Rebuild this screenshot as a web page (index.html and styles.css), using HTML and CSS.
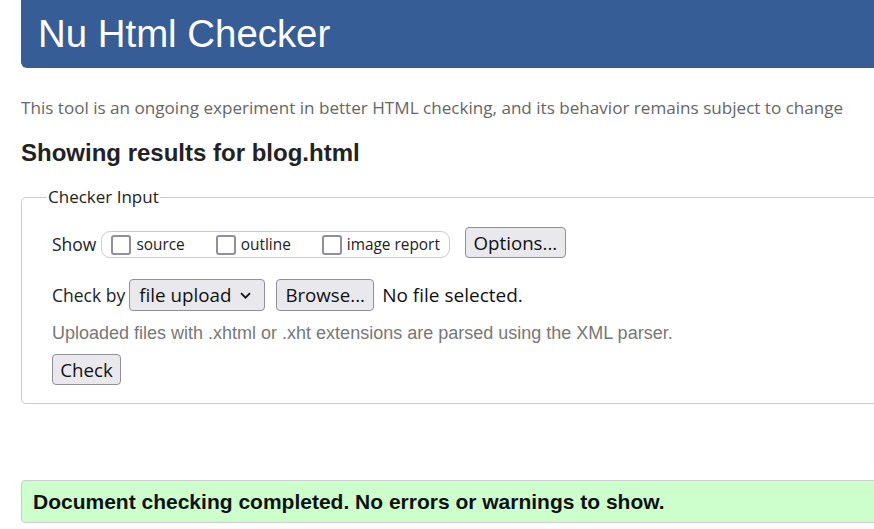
FILE: index.html
```html
<!DOCTYPE html>
<html>
<head>
<meta charset="utf-8">
<title>Nu Html Checker</title>
<link rel="stylesheet" href="styles.css">
</head>
<body>
<header class="masthead"><h1 class="title">Nu Html Checker</h1></header>
<p class="intro">This tool is an ongoing experiment in better HTML checking, and its behavior remains subject to change</p>
<h2 class="results">Showing results for blog.html</h2>
<form class="form">
  <fieldset class="inputs">
    <legend class="legend">Checker Input</legend>
    <div class="body">
      <div class="row row-show">
        <span class="label label-show">Show</span>
        <div class="showbox">
          <label class="opt"><span class="cb"></span>source</label>
          <label class="opt"><span class="cb"></span>outline</label>
          <label class="opt"><span class="cb"></span>image report</label>
        </div>
        <button type="button" class="btn btn-options">Options...</button>
      </div>
      <div class="row row-check">
        <span class="label label-check">Check by</span>
        <span class="select">file upload<svg class="chev" width="11" height="7" viewBox="0 0 11 7"><path d="M1 1.2 L5.5 5.7 L10 1.2" fill="none" stroke="#111" stroke-width="1.7"/></svg></span>
        <button type="button" class="btn btn-browse">Browse...</button>
        <span class="nofile">No file selected.</span>
      </div>
      <p class="note">Uploaded files with .xhtml or .xht extensions are parsed using the XML parser.</p>
      <button type="button" class="btn btn-check">Check</button>
    </div>
  </fieldset>
</form>
<div class="success">Document checking completed. No errors or warnings to show.</div>
</body>
</html>
```
FILE: styles.css
```css
html { overflow: hidden; }
body {
  margin: 0 0 0 21px;
  width: 900px;
  font-family: "Open Sans", "Noto Sans", sans-serif;
  color: #222;
  background: #fff;
}
.masthead {
  background: #365d95;
  height: 68px;
  border-radius: 0 0 0 6px;
  display: flex;
  align-items: center;
}
.title {
  margin: 0 0 0 17px;
  font-family: "Liberation Sans", Arial, sans-serif;
  font-weight: normal;
  font-size: 38.4px;
  color: #fff;
}
.intro {
  margin: 29px 0 0 0;
  font-size: 17.1px;
  color: #666;
  line-height: 22px;
}
.results {
  margin: 20px 0 0 0;
  font-family: "Liberation Sans", Arial, sans-serif;
  font-weight: bold;
  font-size: 24px;
  color: #222;
  line-height: 28px;
}
.form { margin-top: 19px; }
.inputs {
  margin: 0;
  border: 1px solid #ccc;
  border-radius: 5px;
  padding: 19px 0 18px 0;
}
.legend {
  padding: 0 1px;
  margin-left: 25px;
  font-size: 17px;
  line-height: 22px;
  color: #222;
}
.body { padding-left: 30px; }
.row { display: flex; align-items: flex-end; }
.row-show { height: 31px; }
.row-check { height: 32px; margin-top: 21px; align-items: center; }
.label { font-size: 17.5px; color: #222; }
.label-show { margin-right: 5px; line-height: 27px; }
.label-check { margin-right: 4px; }
.showbox {
  display: flex;
  align-items: center;
  border: 1px solid #ccc;
  border-radius: 9px;
  height: 27px;
  box-sizing: border-box;
  padding: 0 9px 0 9px;
  gap: 31px;
  margin-right: 15px;
}
.opt { display: flex; align-items: center; font-size: 15.4px; color: #222; }
.cb {
  width: 20px;
  height: 20px;
  border: 2px solid #8f8f9d;
  border-radius: 3px;
  margin-right: 5px;
  box-sizing: border-box;
}
.btn {
  font-family: "Open Sans", "Noto Sans", sans-serif;
  font-size: 18.7px;
  color: #111;
  background: #e9e9ed;
  border: 1px solid #8f8f9d;
  border-radius: 4px;
  padding: 0;
  height: 31px;
  line-height: 29px;
  box-sizing: border-box;
  text-align: center;
}
.btn-options { width: 101px; }
.select {
  display: flex;
  align-items: center;
  justify-content: space-between;
  font-size: 18.8px;
  color: #111;
  background: #e9e9ed;
  border: 1px solid #8f8f9d;
  border-radius: 4px;
  height: 32px;
  width: 136px;
  box-sizing: border-box;
  padding: 0 13px 0 9px;
  margin-right: 11px;
}
.btn-browse { width: 98px; margin-right: 8px; height: 32px; line-height: 30px; }
.nofile { font-size: 19px; color: #111; }
.note {
  margin: 12px 0 0 0;
  font-family: "Liberation Sans", Arial, sans-serif;
  font-size: 18px;
  color: #777;
  line-height: 20px;
}
.btn-check { margin-top: 11px; width: 69px; display: block; }
.success {
  margin-top: 76px;
  height: 43px;
  box-sizing: border-box;
  background: #ccffcc;
  border: 1px solid #ccc;
  border-radius: 4px;
  display: flex;
  align-items: center;
  padding-left: 11px;
  font-family: "Liberation Sans", Arial, sans-serif;
  font-weight: bold;
  font-size: 21px;
  color: #111;
}
```
